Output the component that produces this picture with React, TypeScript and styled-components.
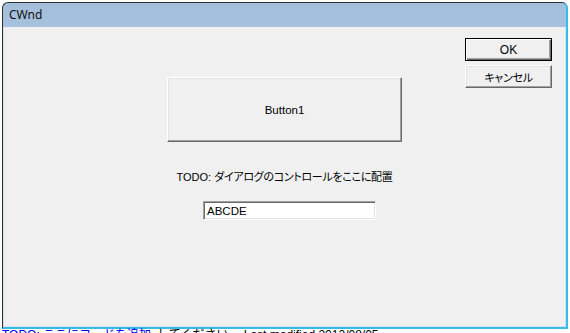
import React from 'react';
import styled, {createGlobalStyle} from 'styled-components';

const GlobalStyle = createGlobalStyle`
  html, body {
    margin: 0;
    padding: 0;
    background: #ffffff;
  }
  body {
    font-family: "Liberation Sans", "Noto Sans CJK JP", sans-serif;
    font-size: 12px;
  }
`;

const App = () => {
  return (
    <>
      <GlobalStyle/>
      <Desktop>
        <Window>
          <TitleBar>CWnd</TitleBar>
          <Client>
            <MainColumn>
              <BigButton>Button1</BigButton>
              <Label>TODO: <Jp>ダイアログのコントロールをここに配置</Jp></Label>
              <EditBox offset={10}>ABCDE</EditBox>
            </MainColumn>
            <SideColumn>
              <DialogButton isDefault>OK</DialogButton>
              <DialogButton><Jp>キャンセル</Jp></DialogButton>
            </SideColumn>
          </Client>
        </Window>
        <BehindText>
          <Link>TODO: ここにコードを追加</Link>
          <span>してください。 Last modified 2012/08/05</span>
        </BehindText>
      </Desktop>
    </>
  );
};

export default App;

const Desktop = styled.div`
  width: 570px;
  height: 333px;
  overflow: hidden;
  padding: 2px 0 0 2px;
  box-sizing: border-box;
`;

const Window = styled.div`
  width: 566px;
  height: 327px;
  box-sizing: border-box;
  display: flex;
  flex-direction: column;
  border: 1px solid #2e2e2e;
  border-right: 2px solid #35bde3;
  border-bottom: 2px solid #35bde3;
  border-radius: 6px 6px 0 0;
  overflow: hidden;
  background: linear-gradient(#a4bfdc, #c3d9ef);
`;

const TitleBar = styled.div`
  height: 24px;
  flex: none;
  display: flex;
  align-items: center;
  padding: 0 0 1px 6px;
  box-sizing: border-box;
  font-family: "Noto Sans", "Open Sans", sans-serif;
  font-size: 12px;
  color: #111;
`;

const Client = styled.div`
  flex: 1;
  display: flex;
  justify-content: space-between;
  align-items: flex-start;
  background: #f0f0f0;
  border-left: 1px solid #d2e3f3;
  border-right: 1px solid #d2e3f3;
  border-bottom: 1px solid #d2e3f3;
  padding: 11px 13px 0 163px;
`;

const MainColumn = styled.div`
  width: 235px;
  margin-top: 39px;
  display: flex;
  flex-direction: column;
  align-items: center;
`;

const SideColumn = styled.div`
  width: 87px;
  display: flex;
  flex-direction: column;
  gap: 4px;
`;

const raised = `
  box-sizing: border-box;
  background: #f0f0f0;
  color: #000;
  font-family: "Liberation Sans", "Noto Sans CJK JP", sans-serif;
  font-size: 12px;
  display: flex;
  align-items: center;
  justify-content: center;
  padding: 0;
`;

const BigButton = styled.button`
  ${raised};
  width: 235px;
  height: 65px;
  font-size: 11.5px;
  border-style: solid;
  border-width: 1px;
  border-color: #ffffff #696969 #696969 #ffffff;
  box-shadow: inset -1px -1px 0 #a0a0a0, inset 1px 1px 0 #e3e3e3;
`;

const DialogButton = styled.button<{isDefault?: boolean}>`
  ${raised};
  width: 87px;
  height: 23px;
  border: 1px solid ${p => p.isDefault ? '#000' : '#ffffff'};
  ${p => !p.isDefault && 'border-color: #ffffff #696969 #696969 #ffffff;'}
  box-shadow: ${p => p.isDefault
    ? 'inset 1px 1px 0 #ffffff, inset -1px -1px 0 #696969, inset -2px -2px 0 #a0a0a0'
    : 'inset -1px -1px 0 #a0a0a0, inset 1px 1px 0 #e3e3e3'};
`;

const Label = styled.div`
  margin-top: 27px;
  height: 14px;
  line-height: 14px;
  white-space: nowrap;
  font-size: 11px;
  color: #000;
`;

const Jp = styled.span`
  font-family: "Noto Sans CJK JP", sans-serif;
  font-feature-settings: "palt";
  font-size: 11px;
  letter-spacing: -0.3px;
`;

const EditBox = styled.div<{offset: number}>`
  box-sizing: border-box;
  width: 173px;
  height: 19px;
  margin-top: 18px;
  margin-left: ${p => p.offset}px;
  background: #fff;
  border-style: solid;
  border-width: 1px;
  border-color: #a0a0a0 #ffffff #ffffff #a0a0a0;
  box-shadow: inset 1px 1px 0 #696969, inset -1px -1px 0 #e3e3e3;
  padding: 0 3px;
  display: flex;
  align-items: center;
  font-size: 11.5px;
  color: #000;
`;

const BehindText = styled.div`
  margin-top: -1px;
  white-space: nowrap;
  font-size: 12px;
  line-height: 14px;
  color: #000;
`;

const Link = styled.span`
  color: #0000ee;
  text-decoration: underline;
  margin-right: 6px;
`;
